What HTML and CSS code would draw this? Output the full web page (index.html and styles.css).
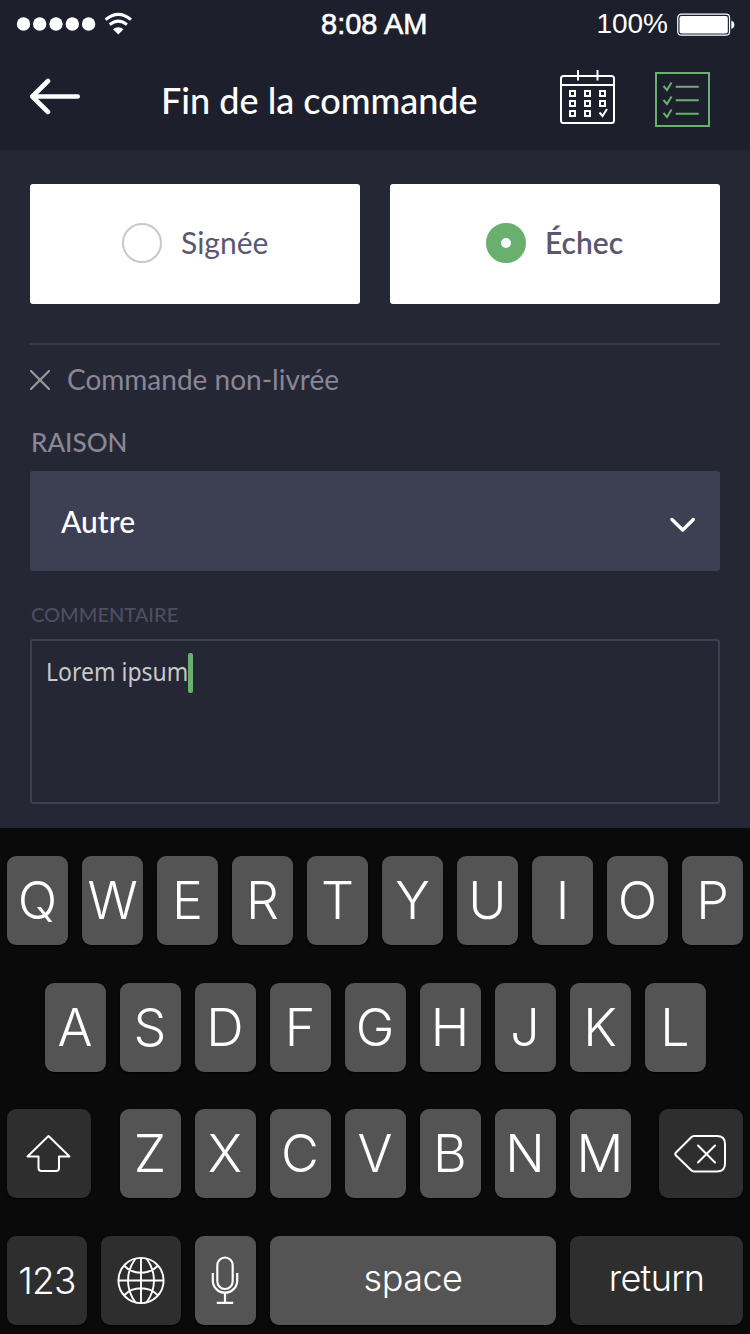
FILE: index.html
```html
<!DOCTYPE html>
<html lang="fr">
<head>
<meta charset="utf-8">
<title>Fin de la commande</title>
<link rel="stylesheet" href="styles.css">
</head>
<body>
<div class="screen">
  <header class="top">
    <div class="status">
      <svg class="signal" width="120" height="28" viewBox="0 0 120 28">
        <g fill="#fff"><circle cx="7.5" cy="14" r="6.7"/><circle cx="23.7" cy="14" r="6.7"/><circle cx="40" cy="14" r="6.7"/><circle cx="56.3" cy="14" r="6.7"/><circle cx="72.6" cy="14" r="6.7"/>
        <path d="M102.300 24.500L97 19.200Q102.300 15.300 107.600 19.200Z"/></g>
        <g fill="none" stroke="#fff" stroke-width="3"><path d="M89.600 9.700Q102.300-.900 115 9.700"/><path d="M93.700 14.600Q102.300 7.600 110.900 14.600"/></g>
      </svg>
      <span class="time">8:08 AM</span>
      <span class="percent">100%</span>
      <svg class="battery" width="58" height="24" viewBox="0 0 58 24">
        <rect x=".75" y="1.200" width="51.800" height="21" rx="3.500" fill="none" stroke="#fff" stroke-width="1.200"/>
        <rect x="2.500" y="3" width="48.300" height="17.500" rx="2" fill="#fff"/>
        <path d="M54.300 7.500a4.500 4.500 0 0 1 0 8.500z" fill="#fff"/>
      </svg>
    </div>
    <div class="nav">
      <svg class="back" width="52" height="38" viewBox="0 0 52 38" fill="none" stroke="#fff" stroke-width="4.600" stroke-linecap="round" stroke-linejoin="round"><path d="M48.700 19.500H3.300M19 4L3.300 19.500L19 35"/></svg>
      <h1 class="title">Fin de la commande</h1>
      <svg class="calendar" width="56" height="56" viewBox="0 0 56 56" fill="none" stroke="#fff" stroke-width="2">
        <rect x="1" y="6" width="53" height="47" rx="2.500"/><path d="M1 15H54M18 0v10.500M37.500 0v10.500"/>
        <path d="M10 21h5v5h-5zM25 21h5v5h-5zM40 21h5v5h-5zM10 31h5v5h-5zM25 31h5v5h-5zM40 31h5v5h-5zM10 41h5v5h-5zM25 41h5v5h-5zM39.500 42.500l3 3.500l4.500-7"/>
      </svg>
      <svg class="checklist" width="56" height="56" viewBox="0 0 56 56" fill="none" stroke="#69b06f" stroke-width="2">
        <rect x="1" y="1" width="53" height="53"/><path d="M8.500 14l3.500 4l4.500-7.500M8.500 28l3.500 4l4.500-7.500M8.500 41l3.500 4l4.500-7.500"/><path stroke-linecap="round" d="M21.500 14.700H43M21.500 28.200H43M21.500 41.700H43"/>
      </svg>
    </div>
  </header>

  <main class="form">
    <div class="options">
      <label class="option"><span class="radio"></span><span class="option-label">Signée</span></label>
      <label class="option option-on"><span class="radio radio-on"></span><span class="option-label label-on">Échec</span></label>
    </div>
    <div class="notice">
      <svg width="20" height="20" viewBox="0 0 20 20" stroke="#999" stroke-width="2.200" stroke-linecap="round"><path d="M1 1L19 19M19 1L1 19"/></svg>
      <span class="notice-text">Commande non-livrée</span>
    </div>
    <div class="label">RAISON</div>
    <div class="select">
      <span class="value">Autre</span>
      <svg width="26" height="16" viewBox="0 0 26 16" fill="none" stroke="#fff" stroke-width="3.400" stroke-linecap="round" stroke-linejoin="round"><path d="M2 2.500L12.700 13L23.300 2.500"/></svg>
    </div>
    <div class="sublabel">COMMENTAIRE</div>
    <div class="comment"><span class="comment-text">Lorem ipsum</span><i class="caret"></i></div>
  </main>

  <section class="keyboard">
    <div class="row">
      <span class="key">Q</span><span class="key">W</span><span class="key">E</span><span class="key">R</span><span class="key">T</span><span class="key">Y</span><span class="key">U</span><span class="key">I</span><span class="key">O</span><span class="key">P</span>
    </div>
    <div class="row">
      <span class="key">A</span><span class="key">S</span><span class="key">D</span><span class="key">F</span><span class="key">G</span><span class="key">H</span><span class="key">J</span><span class="key">K</span><span class="key">L</span>
    </div>
    <div class="row row-spread">
      <span class="key dark edge"><svg width="46" height="40" viewBox="0 0 46 40" fill="none" stroke="#fff" stroke-width="2" stroke-linejoin="round"><path d="M22.500 2L43.500 22.500H33V34q0 3-3 3H15.500q-3 0-3-3V22.500H1.500Z"/></svg></span>
      <div class="group"><span class="key">Z</span><span class="key">X</span><span class="key">C</span><span class="key">V</span><span class="key">B</span><span class="key">N</span><span class="key">M</span></div>
      <span class="key dark edge"><svg width="54" height="40" viewBox="0 0 54 40" fill="none" stroke="#fff" stroke-width="2" stroke-linejoin="round" stroke-linecap="round"><path d="M20 2H43q8 0 8 8V29.500q0 8-8 8H20q-1.500 0-3-1.500L2 21.500q-1.500-1.500 0-3L17 3.500Q18.500 2 20 2ZM24 11.500L41 28.500M41 11.500L24 28.500"/></svg></span>
    </div>
    <div class="row">
      <span class="key dark fn digits">123</span>
      <span class="key dark fn"><svg width="50" height="50" viewBox="0 0 50 50" fill="none" stroke="#fff" stroke-width="1.900"><circle cx="25" cy="25.500" r="22.600"/><path d="M2.400 25.500H47.600M25 3V48M19.500 3.500C9.500 17 9.500 34 19.500 47.500M30.500 3.500C40.500 17 40.500 34 30.500 47.500M8.500 11C17 20 33 20 41.500 11M8.500 40C17 31 33 31 41.500 40"/></svg></span>
      <span class="key"><svg width="30" height="50" viewBox="0 0 30 50" fill="none" stroke="#fff" stroke-width="2.200"><rect x="6.300" y="2.500" width="15.400" height="31.500" rx="7.700"/><path d="M1.800 18V25.500a12.200 12.200 0 0 0 24.400 0V18M14 37.700V47.800M5.800 47.800H22.200"/></svg></span>
      <span class="key space">space</span>
      <span class="key dark return">return</span>
    </div>
  </section>
</div>
</body>
</html>
```

FILE: styles.css
```css
* { box-sizing: border-box; }
body { margin: 0; background: #252735; font-family: Lato, "Open Sans", sans-serif; }
svg { display: block; flex: none; }
.screen { width: 750px; height: 1334px; display: flex; flex-direction: column; overflow: hidden; background: #252735; }

.top { height: 150px; background: #1d202c; color: #fff; }
.status { height: 48px; padding: 0 15px 0 16px; display: grid; grid-template-columns: 305px 347px 67px; align-items: center; font-family: "Liberation Sans", Arial, sans-serif; font-size: 29px; line-height: 48px; }
.status { grid-template-columns: 305px 277px 70px 67px; }
.signal { margin-top: -1px; }
.time { -webkit-text-stroke: .6px #fff; white-space: nowrap; }
.percent { justify-self: end; white-space: nowrap; font-size: 28px; }
.battery { justify-self: end; margin-top: 1px; }
.nav { height: 102px; display: flex; align-items: flex-start; padding-left: 29px; }
.back { margin-top: 29px; }
.title { margin: 30px 0 0 80px; width: 398px; font-size: 36px; line-height: 44px; font-weight: 500; white-space: nowrap; }
.calendar { margin: 22px 39px 0 1px; }
.checklist { margin-top: 24px; }

.form { height: 678px; padding: 34px 30px 0; display: flex; flex-direction: column; }
.options { display: grid; grid-template-columns: 1fr 1fr; gap: 30px; padding-bottom: 39px; border-bottom: 2px solid #36384c; }
.option { height: 120px; display: flex; gap: 19px; padding: 0 0 2px 92px; align-items: center; background: #fff; border-radius: 3px; color: #5b5770; }
.option-on { padding-left: 96px; }
.radio { width: 40px; height: 40px; border-radius: 50%; border: 2px solid #c8c7cf; }
.radio-on { border: 15px solid #69b06f; }
.option-label { margin-top: -2px; font-size: 30px; line-height: 40px; }
.label-on { font-weight: 600; }
.notice { display: flex; align-items: center; gap: 17px; height: 36px; margin-top: 17px; color: #898696; }
.notice-text { margin-top: -2px; font-size: 28px; line-height: 34px; }
.label { margin: 28px 0 0 1px; height: 32px; line-height: 32px; font-size: 26px; font-weight: 500; color: #898696; }
.select { margin-top: 13px; height: 100px; border-radius: 3px; background: #3d3f53; display: flex; align-items: center; justify-content: space-between; padding: 7px 24px 0 31px; }
.value { margin-top: -7px; font-size: 30px; line-height: 36px; font-weight: 500; color: #fff; }
.sublabel { margin: 30px 0 0 1px; height: 26px; line-height: 26px; font-size: 20px; font-weight: 500; color: #4f4d62; }
.comment { margin-top: 12px; height: 165px; border: 2px solid #3d3f53; border-radius: 3px; display: flex; align-items: flex-start; padding: 12px 14px; }
.comment-text { width: 142px; white-space: nowrap; transform: scaleX(.92); transform-origin: left; font-family: "Noto Sans", sans-serif; font-size: 25px; line-height: 36px; color: #c8c8cb; }
.caret { width: 5px; height: 40px; border-radius: 2px; background: #69b06f; }

.keyboard { height: 506px; padding: 28px 7px 0; display: flex; flex-direction: column; gap: 37.500px; background: #0a0a0a; color: #fff; font-family: Inter, Roboto, sans-serif; font-weight: 300; }
.row { display: flex; gap: 14px; justify-content: center; height: 89px; }
.row-spread { justify-content: space-between; }
.group { display: flex; gap: 14px; }
.key { width: 61px; height: 89px; display: flex; align-items: center; justify-content: center; border-radius: 9px; background: #545454; font-size: 52px; line-height: 89px; box-shadow: 0 1px 2px #000; }
.dark { background: #2e2e2e; }
.edge { width: 84px; }
.fn { width: 80px; }
.digits { padding-top: 1px; font-size: 37px; letter-spacing: -.8px; }
.space { width: 286px; padding-bottom: 3px; font-size: 36px; letter-spacing: -.5px; }
.return { width: 173px; padding-bottom: 3px; font-size: 36px; letter-spacing: -.7px; }
```
